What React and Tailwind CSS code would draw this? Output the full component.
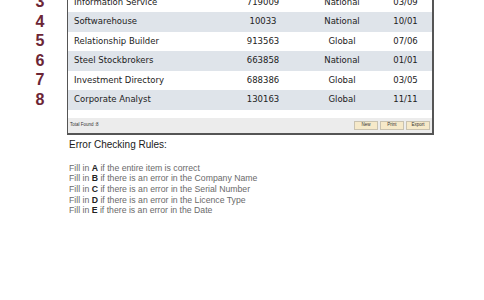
import React from 'react';

const rows = [
  { n: 3, name: 'Information Service', serial: '719009', type: 'National', date: '03/09' },
  { n: 4, name: 'Softwarehouse', serial: '10033', type: 'National', date: '10/01' },
  { n: 5, name: 'Relationship Builder', serial: '913563', type: 'Global', date: '07/06' },
  { n: 6, name: 'Steel Stockbrokers', serial: '663858', type: 'National', date: '01/01' },
  { n: 7, name: 'Investment Directory', serial: '688386', type: 'Global', date: '03/05' },
  { n: 8, name: 'Corporate Analyst', serial: '130163', type: 'Global', date: '11/11' },
];

const rules = [
  ['A', 'if the entire item is correct'],
  ['B', 'if there is an error in the Company Name'],
  ['C', 'if there is an error in the Serial Number'],
  ['D', 'if there is an error in the Licence Type'],
  ['E', 'if there is an error in the Date'],
];

export default function App() {
  return (
    <div className="w-[484px] h-[300px] overflow-hidden bg-white">
      <div className="-mt-[7.5px] flex">
        {/* question numbers */}
        <div className="w-[67px] flex flex-col">
          {rows.map(r => (
            <div
              key={r.n}
              className="h-[19.5px] pl-[13px] flex items-center justify-center text-[16px] font-bold text-[#6b2536] font-['Liberation_Sans',Arial,sans-serif]"
            >
              {r.n}
            </div>
          ))}
        </div>

        {/* listing window */}
        <div className="w-[367px] border-l border-r-2 border-b-2 border-[#555] bg-white font-['DejaVu_Sans',Verdana,sans-serif] text-[8.5px] text-[#222]">
          {rows.map((r, i) => (
            <div
              key={r.n}
              className={`h-[19.5px] grid grid-cols-[157px_76px_82px_1fr] items-center ${i % 2 === 1 ? 'bg-[#dfe4ea]' : 'bg-white'}`}
            >
              <div className="pl-[6px]">{r.name}</div>
              <div className="text-center">{r.serial}</div>
              <div className="text-center">{r.type}</div>
              <div className="text-center pr-[4px]">{r.date}</div>
            </div>
          ))}
          <div className="h-[8px]" />
          <div className="h-[15.5px] bg-[#ececec] flex items-center justify-between pl-[2px] pr-[2px]">
            <span className="text-[4.5px] text-[#333] font-['Liberation_Sans',Arial,sans-serif]">Total Found :8</span>
            <div className="flex gap-[2px] font-['Liberation_Sans',Arial,sans-serif] text-[4.5px] text-[#333]">
              <div className="w-[24px] h-[9px] bg-[#f6e9c9] border border-[#c9c2b0] flex items-center justify-center">New</div>
              <div className="w-[24px] h-[9px] bg-[#f6e9c9] border border-[#c9c2b0] flex items-center justify-center">Print</div>
              <div className="w-[24px] h-[9px] bg-[#f6e9c9] border border-[#c9c2b0] flex items-center justify-center">Export</div>
            </div>
          </div>
        </div>
      </div>

      {/* rules */}
      <div className="pl-[69px] font-['Liberation_Sans',Arial,sans-serif]">
        <div className="mt-[4px] h-[12px] leading-[12px] text-[10px] text-[#1a1a1a]">Error Checking Rules:</div>
        <div className="mt-[11.6px] flex flex-col text-[8.7px] leading-[10.7px] text-[#6a6a6a]">
          {rules.map(([l, t]) => (
            <div key={l}>
              Fill in <span className="font-bold text-[#222]">{l}</span> {t}
            </div>
          ))}
        </div>
      </div>
    </div>
  );
}
